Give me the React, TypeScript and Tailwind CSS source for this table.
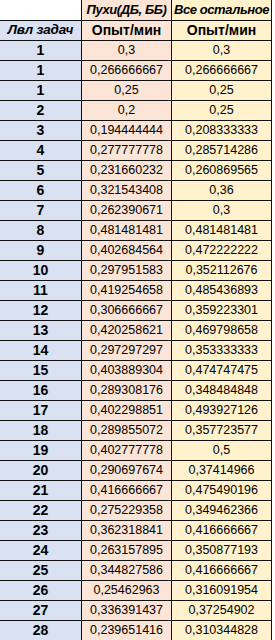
const rows: [string, string, string][] = [
  ["1", "0,3", "0,3"],
  ["1", "0,266666667", "0,266666667"],
  ["1", "0,25", "0,25"],
  ["2", "0,2", "0,25"],
  ["3", "0,194444444", "0,208333333"],
  ["4", "0,277777778", "0,285714286"],
  ["5", "0,231660232", "0,260869565"],
  ["6", "0,321543408", "0,36"],
  ["7", "0,262390671", "0,3"],
  ["8", "0,481481481", "0,481481481"],
  ["9", "0,402684564", "0,472222222"],
  ["10", "0,297951583", "0,352112676"],
  ["11", "0,419254658", "0,485436893"],
  ["12", "0,306666667", "0,359223301"],
  ["13", "0,420258621", "0,469798658"],
  ["14", "0,297297297", "0,353333333"],
  ["15", "0,403889304", "0,474747475"],
  ["16", "0,289308176", "0,348484848"],
  ["17", "0,402298851", "0,493927126"],
  ["18", "0,289855072", "0,357723577"],
  ["19", "0,402777778", "0,5"],
  ["20", "0,290697674", "0,37414966"],
  ["21", "0,416666667", "0,475490196"],
  ["22", "0,275229358", "0,349462366"],
  ["23", "0,362318841", "0,416666667"],
  ["24", "0,263157895", "0,350877193"],
  ["25", "0,344827586", "0,416666667"],
  ["26", "0,25462963", "0,316091954"],
  ["27", "0,336391437", "0,37254902"],
  ["28", "0,239651416", "0,310344828"],
];

const cell = "h-full flex items-center justify-center border-r border-[#111] whitespace-nowrap";

export default function App() {
  return (
    <div
      className="w-[275px] h-[640px] bg-white text-black overflow-hidden"
      style={{ fontFamily: '"Liberation Sans", Arial, sans-serif' }}
    >
      <div className="w-[272px]">
        {/* header row 1 */}
        <div className="flex h-[20px]">
          <div className={`${cell} w-[82px] bg-white`} />
          <div className={`${cell} w-[90px] bg-[#fce4d6] font-bold italic text-[13px] tracking-[-0.4px]`}>
            Пухи(ДБ, ББ)
          </div>
          <div className={`${cell} w-[100px] bg-[#fff2cc] font-bold italic text-[13px] tracking-[-0.4px]`}>
            Все остальное
          </div>
        </div>

        {/* header row 2 */}
        <div className="flex h-[20px] border-t border-[#111]">
          <div className={`${cell} w-[82px] bg-[#d9e1f2] font-bold italic text-[13.5px] tracking-[-0.2px]`}>Лвл задач</div>
          <div className={`${cell} w-[90px] bg-[#fce4d6] font-bold text-[14px]`}>Опыт/мин</div>
          <div className={`${cell} w-[100px] bg-[#fff2cc] font-bold text-[14px]`}>Опыт/мин</div>
        </div>

        {rows.map(([lvl, a, b], i) => (
          <div key={i} className="flex h-[20px] border-t border-[#111] text-[12.5px]">
            <div className={`${cell} w-[82px] bg-[#d9e1f2] font-bold text-[14px]`}>{lvl}</div>
            <div className={`${cell} w-[90px] bg-[#fce4d6]`}>{a}</div>
            <div className={`${cell} w-[100px] bg-[#fff2cc]`}>{b}</div>
          </div>
        ))}
      </div>
    </div>
  );
}
